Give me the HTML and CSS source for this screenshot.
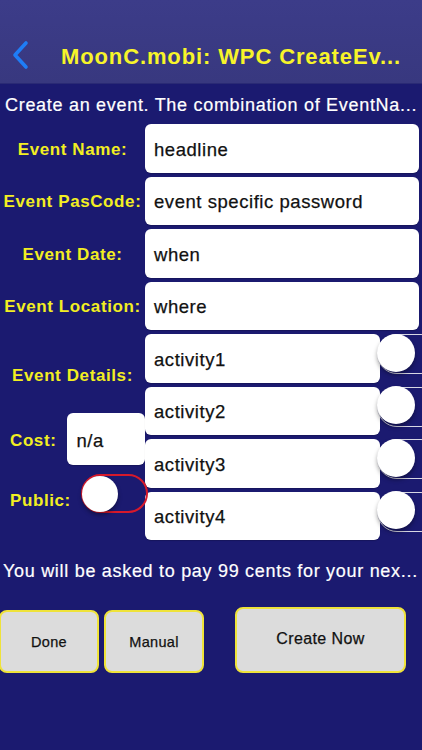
FILE: index.html
```html
<!DOCTYPE html>
<html lang="en">
<head>
<meta charset="utf-8">
<title>MoonC.mobi: WPC CreateEvent</title>
<link rel="stylesheet" href="styles.css">
</head>
<body>
<div class="screen">
  <header class="navbar">
    <svg class="back" width="20" height="30" viewBox="0 0 20 30" aria-label="Back">
      <path d="M16 3 L5 15 L16 27" fill="none" stroke="#1f7df6" stroke-width="3.6" stroke-linecap="round" stroke-linejoin="round"/>
    </svg>
    <h1 class="title">MoonC.mobi: WPC CreateEv...</h1>
  </header>

  <p class="intro">Create an event. The combination of EventNa...</p>

  <div class="form">
    <div class="label">Event Name:</div>
    <div class="field">headline</div>

    <div class="label">Event PasCode:</div>
    <div class="field">event specific password</div>

    <div class="label">Event Date:</div>
    <div class="field">when</div>

    <div class="label">Event Location:</div>
    <div class="field">where</div>

    <div class="lower-left">
      <div class="label details-label">Event Details:</div>
      <div class="cost-row">
        <span class="label small-label">Cost:</span>
        <div class="field cost-field">n/a</div>
      </div>
      <div class="public-row">
        <span class="label small-label public-label">Public:</span>
        <span class="switch switch-public"><span class="knob"></span></span>
      </div>
    </div>

    <div class="activity">
      <div class="field activity-field">activity1</div>
      <span class="switch switch-off"><span class="knob"></span></span>
    </div>
    <div class="activity">
      <div class="field activity-field">activity2</div>
      <span class="switch switch-off"><span class="knob"></span></span>
    </div>
    <div class="activity">
      <div class="field activity-field">activity3</div>
      <span class="switch switch-off"><span class="knob"></span></span>
    </div>
    <div class="activity">
      <div class="field activity-field">activity4</div>
      <span class="switch switch-off"><span class="knob"></span></span>
    </div>
  </div>

  <p class="notice">You will be asked to pay 99 cents for your nex...</p>

  <div class="buttons">
    <button class="btn btn-done">Done</button>
    <button class="btn btn-manual">Manual</button>
    <button class="btn btn-create">Create Now</button>
  </div>
</div>
</body>
</html>
```

FILE: styles.css
```css
* { box-sizing: border-box; }

html, body {
  margin: 0;
  padding: 0;
  background: #1b1a70;
}

body {
  width: 422px;
  height: 750px;
  overflow: hidden;
  font-family: "Liberation Sans", Arial, Helvetica, sans-serif;
}

.screen {
  width: 422px;
  height: 750px;
  background: #1b1a70;
  overflow: hidden;
}

.navbar {
  height: 84px;
  background: linear-gradient(#3c3c89, #38387f);
  border-bottom: 1px solid #2a2a74;
  display: flex;
  align-items: center;
  padding: 30px 0 0 10px;
}

.back {
  display: block;
  flex: none;
  margin-top: -3px;
}

.title {
  margin: 0 0 0 31px;
  font-size: 22px;
  font-weight: bold;
  letter-spacing: 0.88px;
  color: #f7f42a;
  white-space: nowrap;
}

.intro {
  margin: 10px 0 0 5px;
  height: 22px;
  line-height: 22px;
  font-size: 18px;
  letter-spacing: 0.7px;
  color: #ffffff;
  white-space: nowrap;
  -webkit-text-stroke: 0.2px #ffffff;
}

.form {
  display: grid;
  grid-template-columns: 145px 274px;
  grid-auto-rows: 48.5px;
  row-gap: 4px;
  margin-top: 8px;
}

.label {
  align-self: center;
  text-align: center;
  font-size: 17px;
  font-weight: bold;
  letter-spacing: 0.6px;
  line-height: 20px;
  padding-top: 3px;
  color: #f2ee22;
  white-space: nowrap;
}

.field {
  background: #ffffff;
  border-radius: 6px;
  box-shadow: 0 1px 1px rgba(0, 0, 0, 0.18);
  display: flex;
  align-items: center;
  padding: 3px 0 0 9px;
  font-size: 18.5px;
  letter-spacing: 0.55px;
  color: #111111;
  white-space: nowrap;
  -webkit-text-stroke: 0.25px #111111;
}

.lower-left {
  grid-column: 1;
  grid-row: 5 / span 4;
  display: flex;
  flex-direction: column;
  align-items: stretch;
}

.details-label {
  align-self: stretch;
  margin-top: 29px;
}

.cost-row {
  display: flex;
  align-items: center;
  margin-top: 27px;
  height: 52px;
}

.small-label {
  text-align: left;
  margin-left: 10px;
}

.cost-field {
  width: 78px;
  height: 52px;
  margin-left: 11px;
  border-radius: 6px;
}

.public-row {
  display: flex;
  align-items: flex-start;
  margin-top: 9px;
  height: 40px;
}

.public-label {
  align-self: flex-start;
  margin-top: 14px;
}

.activity {
  grid-column: 2;
  display: flex;
  align-items: flex-start;
}

.activity-field {
  width: 235px;
  height: 48.5px;
  flex: none;
}

.switch {
  position: relative;
  display: block;
  flex: none;
  border-radius: 20px;
}

.knob {
  position: absolute;
  left: 0;
  top: 0;
  width: 38px;
  height: 38px;
  border-radius: 50%;
  background: #ffffff;
  box-shadow: 0 3px 4px rgba(0, 0, 0, 0.35);
}

.switch-off {
  width: 64px;
  height: 40px;
  margin-left: -3px;
  border: 1.5px solid #d8d8e4;
}

.switch-off .knob {
  left: -1.5px;
  top: -1.5px;
}

.switch-public {
  width: 67px;
  height: 39px;
  margin-left: 10px;
  border: 2px solid #d7192b;
}

.switch-public .knob {
  width: 36px;
  height: 36px;
  left: -1px;
  top: -0.5px;
}

.notice {
  margin: 20px 0 0 3px;
  height: 22px;
  line-height: 22px;
  font-size: 18px;
  letter-spacing: 0.7px;
  color: #ffffff;
  white-space: nowrap;
  -webkit-text-stroke: 0.2px #ffffff;
}

.buttons {
  display: flex;
  align-items: flex-end;
  margin-top: 25px;
  height: 66px;
}

.btn {
  background: #dcdcdc;
  border: 2px solid #efe33a;
  border-radius: 8px;
  font-family: "Liberation Sans", Arial, Helvetica, sans-serif;
  color: #111111;
  padding: 0;
  -webkit-text-stroke: 0.25px #111111;
}

.btn-done {
  width: 100px;
  height: 63px;
  margin-left: -1px;
  font-size: 14.5px;
  letter-spacing: 0.3px;
}

.btn-manual {
  width: 100px;
  height: 63px;
  margin-left: 5px;
  font-size: 14.5px;
  letter-spacing: 0.3px;
}

.btn-create {
  width: 171px;
  height: 66px;
  margin-left: 31px;
  font-size: 16px;
  letter-spacing: 0.4px;
  padding-bottom: 3px;
}
```
